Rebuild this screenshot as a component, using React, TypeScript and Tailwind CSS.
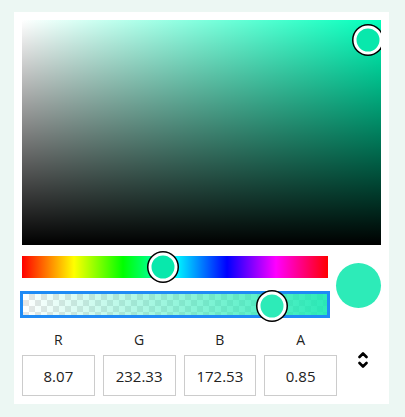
import { memo } from "react"

const channels = [
    { label: "R", value: "8.07" },
    { label: "G", value: "232.33" },
    { label: "B", value: "172.53" },
    { label: "A", value: "0.85" },
]

const Thumb = ({ className }: { className: string }) => (
    <div
        className={`absolute z-10 w-[29px] h-[29px] rounded-full border-[3px] border-white shadow-[0_0_0_1.5px_#000] -translate-x-1/2 -translate-y-1/2 ${className}`}
    />
)

const _ColorPicker = () => {
    return (
        <div className="min-h-screen bg-[#ecf7f3] pt-3 pl-[14px] font-['Open_Sans',sans-serif]">
            <div className="w-[375px] bg-white p-2">
                {/* saturation / value area */}
                <div className="relative h-[225px] w-full overflow-hidden bg-[#00ffbb]">
                    <div className="absolute inset-0 bg-linear-to-r from-white to-transparent" />
                    <div className="absolute inset-0 bg-linear-to-t from-black to-transparent" />
                    <Thumb className="left-[96.5%] top-[8.9%] bg-[#08e8ac]" />
                </div>

                <div className="mt-[11px] flex items-center gap-2">
                    <div className="flex w-[307px] flex-col">
                        <div className="relative h-[22px] bg-[linear-gradient(to_right,#f00_0%,#ff0_17%,#0f0_33%,#0ff_50%,#00f_67%,#f0f_83%,#f00_100%)]">
                            <Thumb className="left-[141px] top-1/2 bg-[#08e8ac]" />
                        </div>
                        <div className="relative mx-px mt-4 h-[21px] bg-[repeating-conic-gradient(#e6e6e6_0_25%,#ffffff_0_50%)] bg-[length:12px_12px] shadow-[0_0_0_3px_#1f8bf5]">
                            <div className="absolute inset-0 bg-linear-to-r from-[#08e8ac00] to-[#08e8acd9]" />
                            <Thumb className="left-[249px] top-[calc(50%+1px)] bg-[#2debb8]" />
                        </div>
                    </div>
                    <div className="h-[45px] w-[45px] rounded-full bg-[#2debb8]" />
                </div>

                <div className="mt-[15px] flex items-center">
                    <div className="grid w-[315px] grid-cols-4 gap-2">
                        {channels.map((c) => (
                            <div key={c.label} className="flex flex-col items-center">
                                <span className="text-[14px] leading-[19px] text-[#222]">{c.label}</span>
                                <input
                                    readOnly
                                    value={c.value}
                                    className="mt-[6px] h-[41px] w-full border border-[#cccccc] text-center text-[15px] text-[#222] outline-none"
                                />
                            </div>
                        ))}
                    </div>
                    <div className="flex flex-1 justify-center pl-2 pb-[6px]">
                        <svg width="10" height="18" viewBox="0 0 10 18" fill="none" stroke="#000" strokeWidth="2.6" strokeLinecap="round" strokeLinejoin="round">
                            <path d="M1.5 6 L5 2.5 L8.5 6" />
                            <path d="M1.5 12 L5 15.5 L8.5 12" />
                        </svg>
                    </div>
                </div>
            </div>
        </div>
    )
}

const ColorPicker = memo(_ColorPicker)

export default function App() {
    return <ColorPicker />
}
